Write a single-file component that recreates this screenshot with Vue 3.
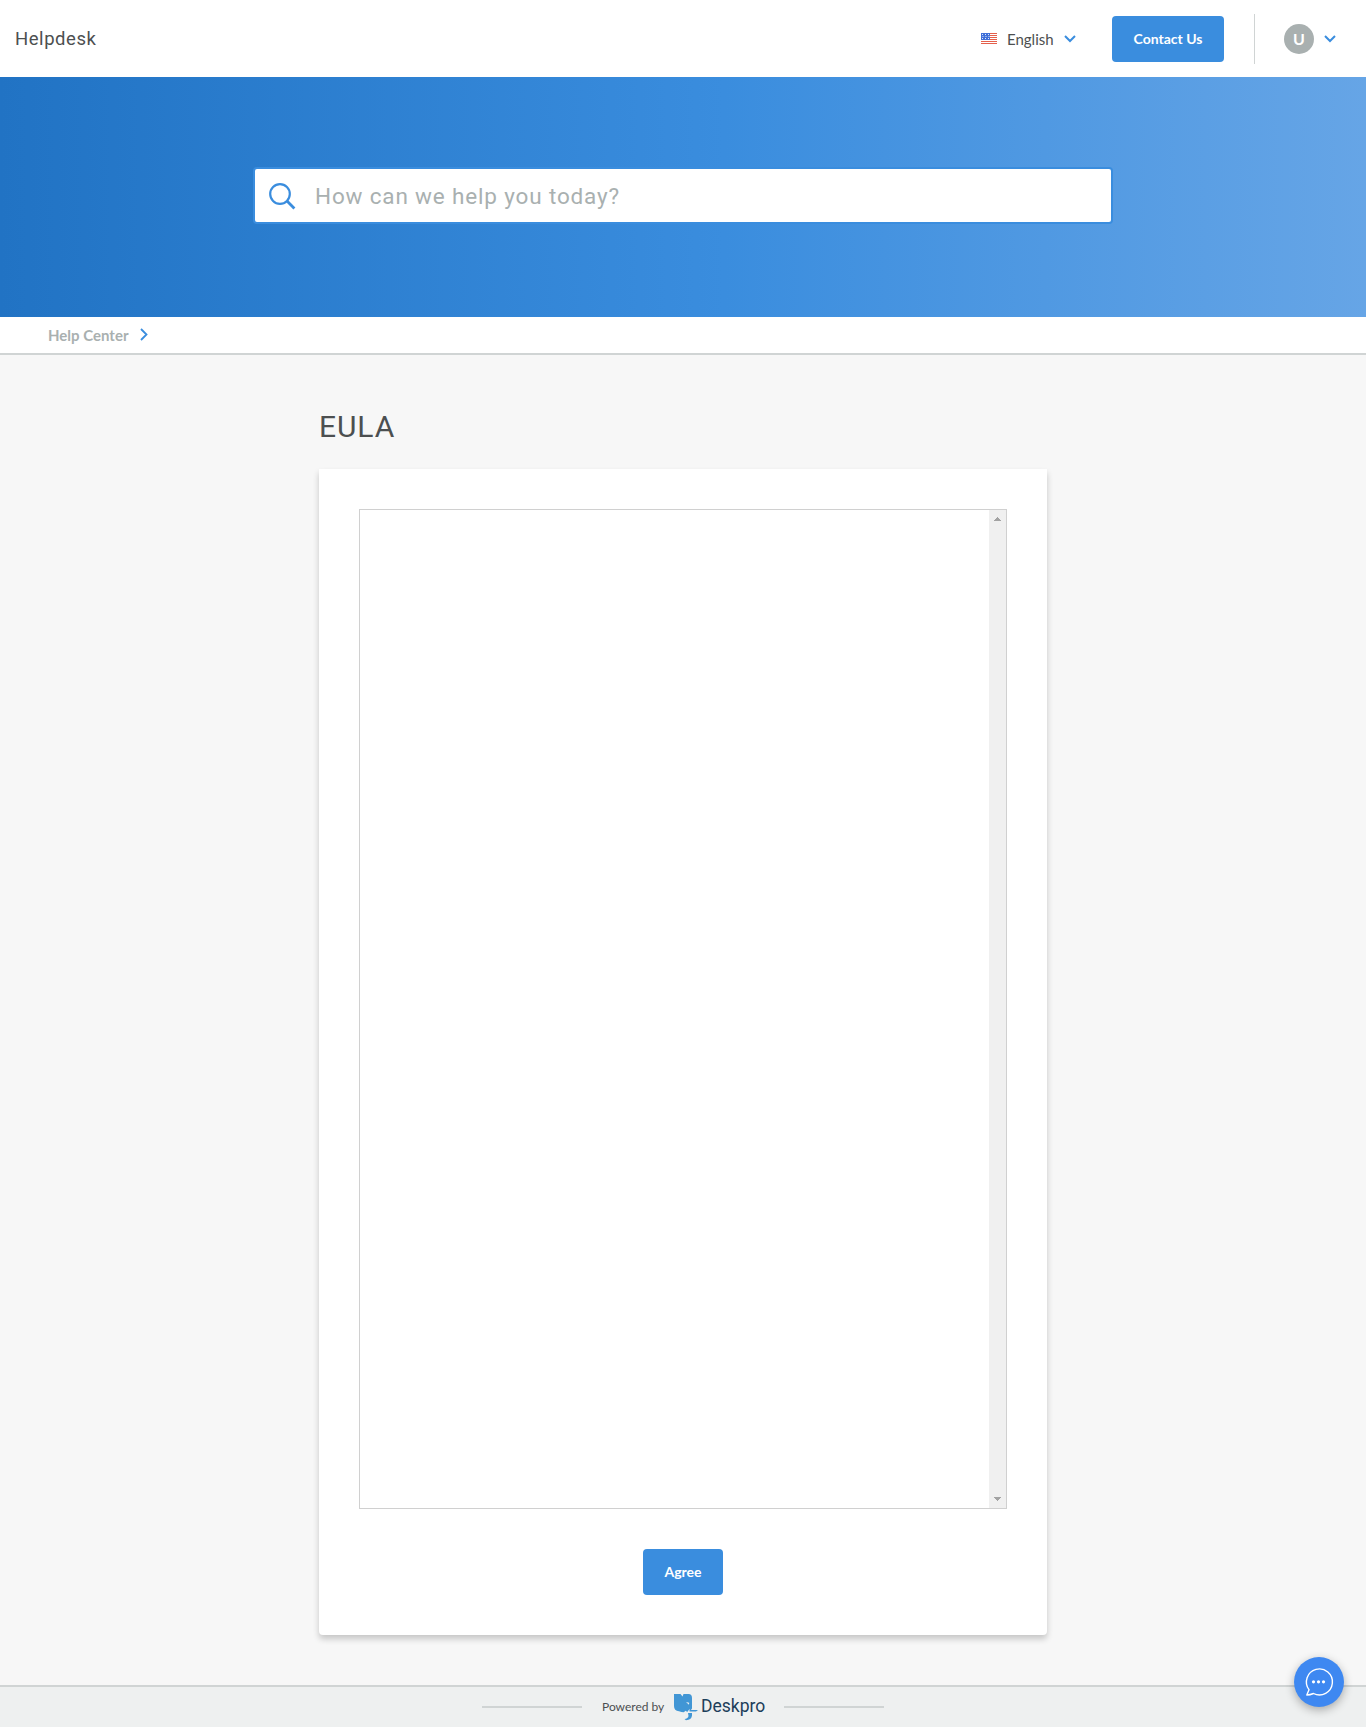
<script setup>
const language = 'English'
const stars = [2, 5, 8]
const stripes = [0, 2, 4, 6, 8, 10]
</script>

<template>
  <div class="page">
    <header class="header">
      <a class="brand">Helpdesk</a>
      <div class="tools">
        <svg class="flag" width="16" height="11" viewBox="0 0 16 11">
          <rect width="16" height="11" fill="#fff" />
          <rect v-for="y in stripes" :key="y" x="0" :y="y" width="16" height="1" fill="#e5604c" />
          <rect x="0" y="0" width="9" height="7" fill="#3f6fd8" />
          <g fill="#dfe9fb">
            <template v-for="x in stars" :key="x">
              <rect :x="x - 1" y="1" width="1" height="1" />
              <rect :x="x - 1" y="5" width="1" height="1" />
              <rect :x="x - 0.5" y="3" width="1" height="1" />
            </template>
          </g>
        </svg>
        <span class="language">{{ language }}</span>
        <svg class="chevron" width="12" height="8" viewBox="0 0 12 8"><path d="M1 1l5 5 5-5" /></svg>
        <button class="button contact">Contact Us</button>
        <span class="divider"></span>
        <span class="avatar">U</span>
        <svg class="chevron" width="12" height="8" viewBox="0 0 12 8"><path d="M1 1l5 5 5-5" /></svg>
      </div>
    </header>

    <section class="hero">
      <div class="search">
        <svg width="27" height="27" viewBox="0 0 27 27">
          <circle cx="11" cy="11" r="9.8" />
          <path d="M18 18l7.4 7.4" stroke-width="2.8" />
        </svg>
        <span class="placeholder">How can we help you today?</span>
      </div>
    </section>

    <nav class="breadcrumb">
      <span>Help Center</span>
      <svg width="8" height="13" viewBox="0 0 8 13"><path d="M1 1l5.500 5.500L1 12" /></svg>
    </nav>

    <main class="main">
      <h1>EULA</h1>
      <div class="card">
        <div class="document">
          <div class="track">
            <svg width="7" height="4" viewBox="0 0 7 4"><path d="M0 4V3h1V2h1V1h1V0h1v1h1v1h1v1h1v1z" /></svg>
            <svg width="7" height="4" viewBox="0 0 7 4"><path d="M0 0v1h1v1h1v1h1v1h1V3h1V2h1V1h1V0z" /></svg>
          </div>
        </div>
        <button class="button agree">Agree</button>
      </div>
    </main>

    <footer class="footer">
      <span class="rule"></span>
      <span class="powered">Powered by</span>
      <svg class="logo" width="24" height="27" viewBox="0 0 24 27">
        <path fill="#4196d5" d="M0 0h6.500l2 2.500L9.500 0h5Q18 0 18 4v10.500l-1.600 2.200-1-1.500-2.200 2.800-1.500-1.200-2 1.400L7.500 18 5 17.300Q0 17 0 12z" />
        <path fill="#eef0f0" d="M12 8l3.200.8-.3 2z" />
        <path fill="#4196d5" d="M15.500 16h8.500l-2 1.500h-6.500z" />
        <path fill="#4196d5" d="M14 19h4v2.500Q17.500 26 12 26.200L10.500 25Q14 24.500 14.500 22z" />
      </svg>
      <span class="wordmark">Deskpro</span>
      <span class="rule"></span>
    </footer>

    <button class="chat" aria-label="Chat">
      <svg width="50" height="50" viewBox="0 0 50 50">
        <path d="M12.800 38l2.200-5.300A13 13 0 1 1 19.500 36.500Q16 38 12.800 38z" fill="none" stroke="#fff" stroke-width="1.400" stroke-linejoin="round" />
        <g fill="#fff"><circle cx="19.500" cy="24.800" r="1.600" /><circle cx="24.500" cy="24.800" r="1.600" /><circle cx="29.500" cy="24.800" r="1.600" /></g>
      </svg>
    </button>
  </div>
</template>

<style>
body { margin: 0; }
</style>

<style scoped>
* { box-sizing: border-box; }
svg { display: block; flex: none; }
.page {
  display: flex;
  flex-direction: column;
  min-height: 1727px;
  background: #f7f7f7;
  color: #4c4f50;
  font-family: Lato, sans-serif;
}
.header {
  display: flex;
  align-items: center;
  justify-content: space-between;
  height: 77px;
  padding: 0 30px 0 15px;
  background: #fff;
}
.brand {
  font: 400 18.5px/24px Roboto, sans-serif;
  letter-spacing: 0.55px;
}
.tools { display: flex; align-items: center; }
.language { width: 47px; margin: 0 10px; font-size: 15px; line-height: 20px; white-space: nowrap; }
.chevron { fill: none; stroke: #3a8dde; stroke-width: 2; }
.button {
  height: 46px;
  padding: 0;
  border: 0;
  border-radius: 4px;
  background: #3a8dde;
  color: #fff;
  font: 700 14px/20px Lato, sans-serif;
}
.contact { width: 112px; margin: 1px 30px 0 36px; }
.divider { width: 1px; height: 50px; margin-right: 29px; background: #d0d4d4; }
.avatar {
  width: 30px;
  height: 30px;
  margin: 1px 10px 0 0;
  border-radius: 50%;
  background: #a9b0b0;
  color: #fff;
  font: 700 16px/29px Lato, sans-serif;
  text-align: center;
}
.hero {
  display: flex;
  justify-content: center;
  height: 240px;
  padding-top: 90px;
  background: linear-gradient(90deg, #2173c4 0%, #3a8dde 53%, #66a5e6 100%);
}
.search {
  display: flex;
  align-items: center;
  width: 860px;
  height: 57px;
  padding-left: 14px;
  border: 2px solid #3a8dde;
  border-radius: 4px;
  background: #fff;
}
.search svg { margin-top: 1px; fill: none; stroke: #3a8dde; stroke-width: 2.2; }
.placeholder {
  margin-left: 19px;
  color: #a9b0b0;
  font: 400 22.5px/30px Roboto, sans-serif;
  letter-spacing: 0.84px;
}
.breadcrumb {
  display: flex;
  align-items: center;
  gap: 12px;
  height: 38px;
  padding-left: 48px;
  border-bottom: 2px solid #d0d4d4;
  background: #fff;
  color: #a9b0b0;
  font-size: 15px;
  font-weight: 700;
}
.breadcrumb svg { margin-top: -1px; fill: none; stroke: #3a8dde; stroke-width: 1.8; }
.main { width: 728px; margin: 0 auto; }
h1 {
  margin: 0;
  padding: 54px 0 24px;
  font: 400 30px/36px Roboto, sans-serif;
  letter-spacing: 0.9px;
}
.card {
  display: flex;
  flex-direction: column;
  align-items: center;
  gap: 40px;
  height: 1166px;
  padding: 40px;
  border-radius: 0 0 4px 4px;
  background: #fff;
  box-shadow: 0 4px 6px rgba(0, 0, 0, 0.2);
}
.document {
  display: flex;
  justify-content: flex-end;
  width: 648px;
  height: 1000px;
  border: 1px solid #d0d0d0;
}
.track {
  display: flex;
  flex-direction: column;
  align-items: center;
  justify-content: space-between;
  width: 17px;
  padding: 7px 0;
  background: #f0f0f0;
}
.track svg { fill: #a3a3a3; }
.agree { width: 80px; }
.footer {
  display: flex;
  align-items: center;
  justify-content: center;
  height: 42px;
  margin-top: auto;
  border-top: 2px solid #d0d4d4;
  background: #eef0f0;
}
.rule { width: 100px; height: 2px; background: #d0d4d4; }
.powered { width: 62px; margin: -2px 10px 0 20px; font-size: 12px; white-space: nowrap; }
.wordmark {
  width: 63px;
  margin: -2px 20px 0 3px;
  color: #1c3e5a;
  font: 400 17.5px/22px Roboto, sans-serif;
}
.chat {
  position: fixed;
  right: 22px;
  bottom: 20px;
  width: 50px;
  height: 50px;
  padding: 0;
  border: 0;
  border-radius: 50%;
  background: #3e88f1;
  box-shadow: 0 3px 10px rgba(0, 0, 0, 0.3);
}
</style>
